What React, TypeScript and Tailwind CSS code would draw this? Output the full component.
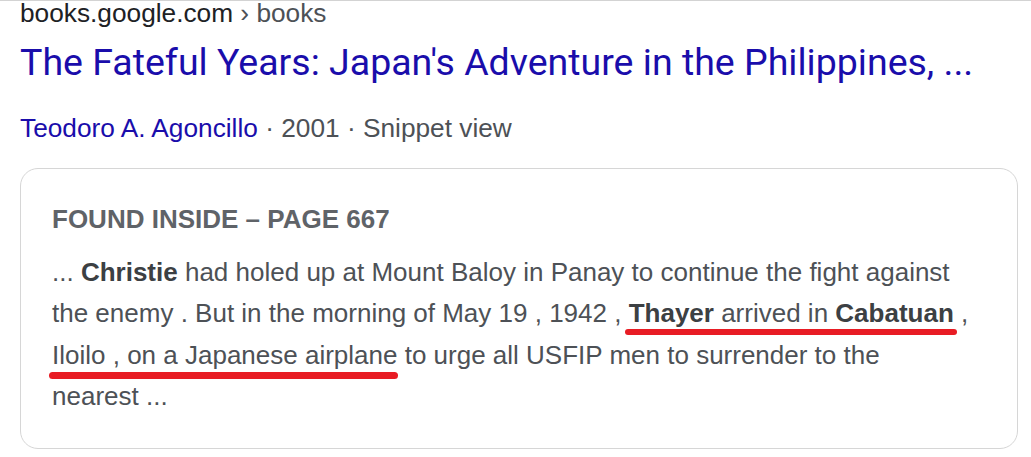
const arial = "font-['Liberation_Sans',Arial,sans-serif]";

function Marked({ children, low }: { children: React.ReactNode; low?: boolean }) {
  // hand-drawn red underline over the snippet
  return (
    <span className="relative">
      {children}
      <span
        className={
          low
            ? "absolute left-[-3px] right-[-1px] top-[32px] h-[7px] rounded-full bg-[#e81c24]"
            : "absolute left-[-4px] right-[-3px] top-[31px] h-[6px] rounded-full bg-[#e81c24]"
        }
      />
    </span>
  );
}

export default function App() {
  return (
    <div className={`min-h-screen bg-white border-t border-[#d3d3d3] ${arial}`}>
      <div className="pl-[20px]">
        <div className="text-[26.25px] leading-[24px] text-[#202124]">
          books.google.com <span className="text-[#4d5156]">› books</span>
        </div>
        <h3 className="mt-[13px] font-['Roboto',sans-serif] text-[37.5px] leading-[48px] text-[#1a0dab]">
          The Fateful Years: Japan's Adventure in the Philippines, ...
        </h3>
        <div className="mt-[28px] text-[26.25px] leading-[28px] text-[#4d5156]">
          <span className="text-[#1a0dab]">Teodoro A. Agoncillo</span> · 2001 · Snippet view
        </div>
        <div className="mt-[26px] w-[998px] rounded-[18px] border border-[#d6d6d6] pl-[31px] pr-[46px] pt-[36px] pb-[31px]">
          <div className="text-[26px] leading-[28px] font-bold text-[#5f6368]">
            FOUND INSIDE – PAGE 667
          </div>
          <p className="mt-[19px] text-[26px] leading-[41.25px] text-[#4d5156]">
            ... <b className="text-[#3c4043]">Christie</b> had holed up at Mount Baloy in Panay to continue the fight against the enemy . But in the morning of May 19 , 1942 ,{" "}
            <Marked>
              <b className="text-[#3c4043]">Thayer</b> arrived in <b className="text-[#3c4043]">Cabatuan</b>
            </Marked>{" "}
            , <Marked low>Iloilo , on a Japanese airplane</Marked> to urge all USFIP men to surrender to the nearest ...
          </p>
        </div>
      </div>
    </div>
  );
}
